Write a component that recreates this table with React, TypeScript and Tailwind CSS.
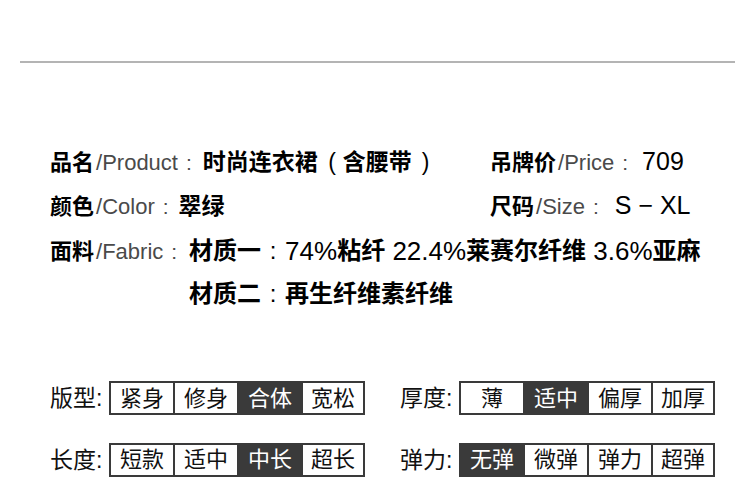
import type { ReactNode } from "react";

const CJK = "font-['Liberation_Sans','Noto_Sans_CJK_SC',sans-serif]";

type Opt = { label: string; active?: boolean };

const specs: { left: [string, Opt[]]; right: [string, Opt[]] }[] = [
  {
    left: [
      "版型:",
      [{ label: "紧身" }, { label: "修身" }, { label: "合体", active: true }, { label: "宽松" }],
    ],
    right: [
      "厚度:",
      [{ label: "薄" }, { label: "适中", active: true }, { label: "偏厚" }, { label: "加厚" }],
    ],
  },
  {
    left: [
      "长度:",
      [{ label: "短款" }, { label: "适中" }, { label: "中长", active: true }, { label: "超长" }],
    ],
    right: [
      "弹力:",
      [{ label: "无弹", active: true }, { label: "微弹" }, { label: "弹力" }, { label: "超弹" }],
    ],
  },
];

function Field({
  cn,
  en,
  gap,
  children,
}: {
  cn: string;
  en: string;
  gap: string;
  children?: ReactNode;
}) {
  return (
    <span className="flex items-baseline whitespace-nowrap">
      <span className="text-[22px] font-bold text-black">{cn}</span>
      <span className="ml-[2px] font-['Liberation_Sans',sans-serif] text-[22px] text-[#4a4a4a]">
        /{en}
      </span>
      <span className={`ml-[8px] text-[21px] text-[#4a4a4a] ${gap}`}>:</span>
      {children}
    </span>
  );
}

// full-width colon / bracket with a fixed box so the spacing doesn't collapse
function Punct({ ch, box }: { ch: string; box: string }) {
  return <span className={`inline-block font-normal ${box}`}>{ch}</span>;
}

function Options({ title, opts }: { title: string; opts: Opt[] }) {
  return (
    <div className="flex items-center">
      <span className="w-[59px] text-[23px] text-[#111]">{title}</span>
      <div className="flex border-2 border-[#3a3a3a]">
        {opts.map((o, i) => (
          <div
            key={o.label}
            className={`flex h-[30px] items-center justify-center text-[22px] ${
              i === 0
                ? "w-[62px]"
                : i === 3
                  ? "w-[62px] border-l-2 border-[#3a3a3a]"
                  : "w-[64px] border-l-2 border-[#3a3a3a]"
            } ${o.active ? "bg-[#3a3a3a] text-white" : "bg-white text-[#111]"}`}
          >
            {o.label}
          </div>
        ))}
      </div>
    </div>
  );
}

export default function App() {
  return (
    <div className={`h-[486px] w-[750px] overflow-hidden bg-white ${CJK}`}>
      <div className="pt-[61px]">
        <div className="ml-[20px] mr-[15px] h-[2px] bg-[#b4b4b4]" />
      </div>

      <div className="pl-[50px] pt-[77px]">
        <div className="flex h-[44px] items-center">
          <div className="w-[440px]">
            <Field cn="品名" en="Product" gap="mr-[11px]">
              <span className="whitespace-pre text-[23px] font-bold text-black">
                时尚连衣裙
                <Punct ch="(" box="w-[25px] text-right pr-[7px]" />
                含腰带
                <Punct ch=")" box="w-[28px] pl-[10px]" />
              </span>
            </Field>
          </div>
          <Field cn="吊牌价" en="Price" gap="mr-[14px]">
            <span className="font-['Liberation_Sans',sans-serif] text-[25px] text-black">709</span>
          </Field>
        </div>
        <div className="flex h-[44px] items-center">
          <div className="w-[440px]">
            <Field cn="颜色" en="Color" gap="mr-[10px]">
              <span className="text-[23px] font-bold text-black">翠绿</span>
            </Field>
          </div>
          <Field cn="尺码" en="Size" gap="mr-[16px]">
            <span className="font-['Liberation_Sans',sans-serif] text-[25px] text-black">
              S − XL
            </span>
          </Field>
        </div>
        <div className="flex pt-[1px]">
          <div className="flex h-[44px] items-center">
            <Field cn="面料" en="Fabric" gap="mr-[12px]" />
          </div>
          <div className="flex flex-col text-[24px] text-black">
            <div className="flex h-[44px] items-center whitespace-pre">
              <span className="font-bold">材质一</span>
              <Punct ch=":" box="w-[24px] text-center" />
              <span className="text-[26px]">74%</span>
              <span className="font-bold">粘纤</span>
              <span className="text-[26px]"> 22.4%</span>
              <span className="font-bold">莱赛尔纤维</span>
              <span className="text-[26px]"> 3.6%</span>
              <span className="font-bold">亚麻</span>
            </div>
            <div className="flex h-[42px] items-center">
              <span className="font-bold">材质二</span>
              <Punct ch=":" box="w-[24px] text-center" />
              <span className="font-bold">再生纤维素纤维</span>
            </div>
          </div>
        </div>
      </div>

      <div className="flex flex-col gap-[27px] pl-[50px] pt-[66px]">
        {specs.map((row, i) => (
          <div key={i} className="flex gap-[35px]">
            <Options title={row.left[0]} opts={row.left[1]} />
            <Options title={row.right[0]} opts={row.right[1]} />
          </div>
        ))}
      </div>
    </div>
  );
}
